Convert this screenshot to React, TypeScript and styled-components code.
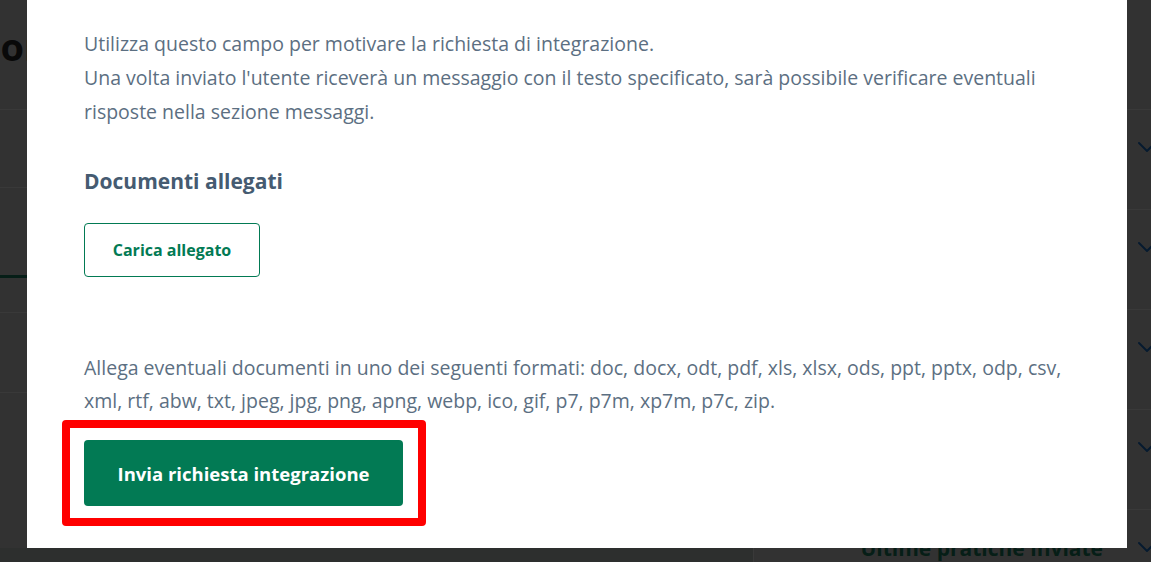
import styled, { createGlobalStyle } from 'styled-components';
import { ChevronDown } from 'lucide-react';

const GlobalStyle = createGlobalStyle`
  html, body {
    margin: 0;
    padding: 0;
    height: 100%;
    overflow: hidden;
  }
  body {
    font-family: 'Open Sans', 'Noto Sans', sans-serif;
    background: #dddddd;
  }
`;

const GREEN = '#027a54';

const sidebarItems = [
  'Pratiche in bozza',
  'Pratiche in lavorazione',
  'Richieste di integrazione',
  'Pagamenti',
  'Ultime pratiche inviate',
];

export default function App() {
  return (
    <>
      <GlobalStyle />
      <Page>
        <Main>
          <PageTitle>Storico pratiche</PageTitle>
          <ListRow $h={78} />
          <ListRow $h={90} $accent />
          <ListRow $h={35} />
          <ListRow $h={80} />
          <ListRow $h={155} $plain />
          <GraySection />
        </Main>
        <Sidebar>
          <SidebarHeader />
          {sidebarItems.map((item) => (
            <SidebarRow key={item}>
              <SidebarTitle>{item}</SidebarTitle>
              <ChevronDown size={32} strokeWidth={1.5} color="#0066cc" />
            </SidebarRow>
          ))}
        </Sidebar>
      </Page>

      <Backdrop>
        <Dialog role="dialog" aria-modal="true">
          <DialogTitle>Richiesta di integrazione</DialogTitle>
          <FieldLabel htmlFor="motivazione">Motivazione</FieldLabel>
          <TextArea id="motivazione" />
          <Text>
            Utilizza questo campo per motivare la richiesta di integrazione.
            <br />
            Una volta inviato l'utente riceverà un messaggio con il testo specificato, sarà possibile verificare eventuali
            risposte nella sezione messaggi.
          </Text>

          <SectionTitle>Documenti allegati</SectionTitle>
          <OutlineButton type="button">Carica allegato</OutlineButton>

          <FormatsText>
            Allega eventuali documenti in uno dei seguenti formati: doc, docx, odt, pdf, xls, xlsx, ods, ppt, pptx, odp, csv,
            xml, rtf, abw, txt, jpeg, jpg, png, apng, webp, ico, gif, p7, p7m, xp7m, p7c, zip.
          </FormatsText>

          <Highlight>
            <PrimaryButton type="button">Invia richiesta integrazione</PrimaryButton>
            <HighlightFrame />
          </Highlight>
        </Dialog>
      </Backdrop>
    </>
  );
}

const Page = styled.div`
  display: grid;
  grid-template-columns: 790px 1fr;
  width: 1218px;
  margin-left: -37px;
  min-height: 562px;
`;

const Main = styled.main`
  display: flex;
  flex-direction: column;
`;

const PageTitle = styled.h1`
  margin: 0;
  height: 110px;
  box-sizing: border-box;
  padding-top: 26px;
  font-size: 38px;
  line-height: 40px;
  font-weight: 700;
  color: #111111;
  white-space: nowrap;
  border-bottom: 1px solid #ffffff;
`;

const ListRow = styled.div<{ $h: number; $accent?: boolean; $plain?: boolean }>`
  height: ${(p) => p.$h}px;
  box-sizing: border-box;
  border-bottom: ${(p) => (p.$plain ? 'none' : p.$accent ? `3px solid ${GREEN}` : '1px solid #ffffff')};
`;

const GraySection = styled.section`
  flex: 1;
  background: #c1cbc6;
`;

const Sidebar = styled.aside`
  border-left: 1px solid #ffffff;
  display: flex;
  flex-direction: column;
`;

const SidebarHeader = styled.div`
  height: 109px;
`;

const SidebarRow = styled.div`
  height: 100px;
  box-sizing: border-box;
  border-top: 1px solid #ffffff;
  display: flex;
  align-items: flex-start;
  justify-content: flex-end;
  gap: 28px;
  padding: 21px 18px 0 0;
`;

const SidebarTitle = styled.span`
  font-size: 21px;
  line-height: 34px;
  font-weight: 700;
  color: ${GREEN};
`;

const Backdrop = styled.div`
  position: fixed;
  inset: 0;
  background: rgba(8, 8, 8, 0.8);
  display: flex;
  flex-direction: column;
  justify-content: flex-end;
  padding: 0 24px 14px 27px;
  overflow: hidden;
`;

const Dialog = styled.div`
  flex-shrink: 0;
  background: #ffffff;
  padding: 32px 57px 42px;
  display: flex;
  flex-direction: column;
  align-items: flex-start;
`;

const DialogTitle = styled.h2`
  margin: 0 0 24px;
  font-size: 28px;
  font-weight: 700;
  color: #17324d;
`;

const FieldLabel = styled.label`
  font-size: 16px;
  font-weight: 700;
  color: #455b71;
  margin-bottom: 8px;
`;

const TextArea = styled.textarea`
  width: 100%;
  height: 160px;
  box-sizing: border-box;
  border: 1px solid #5c6f82;
  border-radius: 4px;
  margin-bottom: 48px;
  resize: none;
`;

const Text = styled.p`
  margin: 0;
  font-size: 19.5px;
  line-height: 33.7px;
  color: #5c6f82;
`;

const FormatsText = styled(Text)`
  margin-top: 74px;
`;

const SectionTitle = styled.h3`
  margin: 38px 0 28px;
  font-size: 21px;
  line-height: 28px;
  font-weight: 700;
  color: #455b71;
`;

const OutlineButton = styled.button`
  width: 176px;
  height: 54px;
  border: 1px solid ${GREEN};
  border-radius: 4px;
  background: #ffffff;
  color: ${GREEN};
  font-family: inherit;
  font-size: 16px;
  font-weight: 700;
  cursor: pointer;
`;

const Highlight = styled.div`
  position: relative;
  margin-top: 22px;
  display: inline-flex;
`;

const HighlightFrame = styled.span`
  position: absolute;
  top: -20px;
  bottom: -20px;
  left: -22px;
  right: -23px;
  border: 8px solid #ff0000;
  border-radius: 4px;
  pointer-events: none;
`;

const PrimaryButton = styled.button`
  width: 319px;
  height: 66px;
  border: none;
  border-radius: 4px;
  background: ${GREEN};
  color: #ffffff;
  font-family: inherit;
  font-size: 18.5px;
  font-weight: 700;
  cursor: pointer;
`;
